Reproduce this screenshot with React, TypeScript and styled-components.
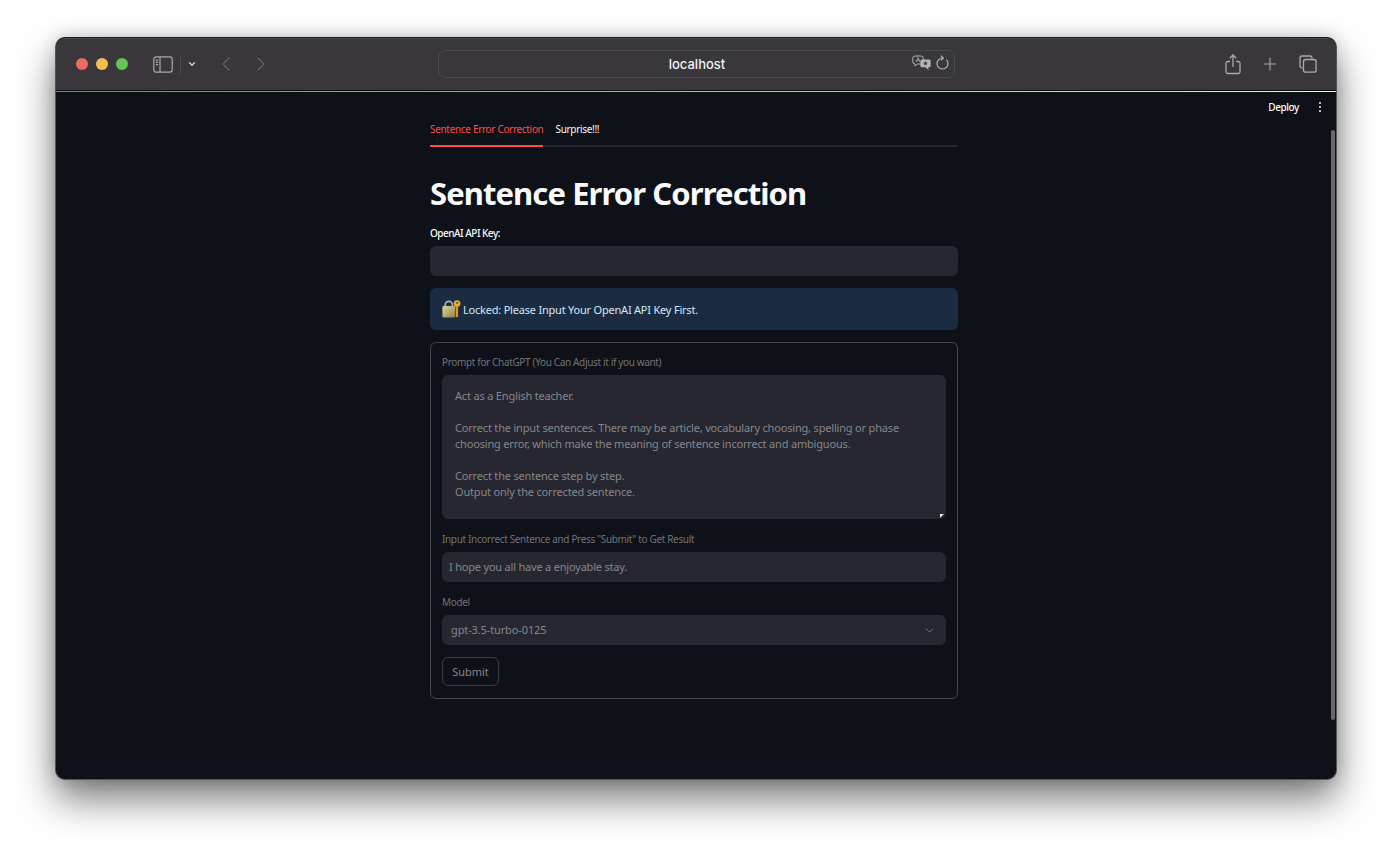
import React from 'react'
import styled, { createGlobalStyle } from 'styled-components'
import { ChevronDown, ChevronLeft, ChevronRight, Plus } from 'lucide-react'

const Global = createGlobalStyle`
  html, body {
    margin: 0;
    height: 100%;
    background: #fff;
    overflow: hidden;
  }
  * { box-sizing: border-box; }
`

const Page = styled.div`
  padding: 37px 55px;
`

const Window = styled.div`
  position: relative;
  width: 1282px;
  height: 743px;
  border-radius: 10px;
  border: 1px solid #55545a;
  border-top-color: #1c1c1e;
  background: #0e1117;
  box-shadow: 0 20px 38px 0 rgba(0, 0, 0, 0.5), 0 0 18px rgba(0, 0, 0, 0.18);
  overflow: hidden;
  display: flex;
  flex-direction: column;
`

const Toolbar = styled.div`
  height: 52px;
  flex: none;
  display: flex;
  align-items: center;
  padding-left: 20px;
  background: #39373c;
  box-shadow: inset 0 1px 0 #48474b;
  color: #a9a8ab;
`

const Lights = styled.div`
  display: flex;
  gap: 8px;
`

const Light = styled.span<{ $color: string }>`
  width: 12px;
  height: 12px;
  border-radius: 50%;
  background: ${p => p.$color};
`

const SidebarButton = styled.div`
  display: flex;
  align-items: center;
  margin-left: 25px;
`

const Divider = styled.span`
  width: 1px;
  height: 19px;
  margin: 0 6px 0 7px;
  background: #4b4a4e;
`

const NavIcons = styled.div`
  display: flex;
  align-items: center;
  gap: 11px;
  margin-left: 17px;
  color: #5f5e62;
`

const AddressBar = styled.div`
  position: relative;
  width: 517px;
  height: 28px;
  margin-left: 165px;
  border: 1px solid #4b4a4f;
  border-radius: 7px;
  display: flex;
  align-items: center;
  justify-content: center;
`

const Host = styled.span`
  font: 500 13px Inter, sans-serif;
  color: #f1f1f2;
  padding-left: 1px;
`

const AddressIcons = styled.div`
  position: absolute;
  right: 5px;
  top: 4px;
  display: flex;
  align-items: center;
  gap: 5px;
  color: #b4b3b6;
`

const Actions = styled.div`
  display: flex;
  align-items: center;
  gap: 19px;
  margin-left: 270px;
  color: #a9a8ab;
`

const Stripe = styled.div`
  height: 2px;
  flex: none;
  background: linear-gradient(90deg, #ff4b4b, #fffd80);
  border-top: 1px solid #0b0b0c;
`

const Main = styled.main`
  flex: 1;
  font-family: 'Noto Sans', sans-serif;
  color: #fafafa;
`

const AppHeader = styled.header`
  height: 30px;
  display: flex;
  align-items: center;
  justify-content: flex-end;
  gap: 17px;
  padding-right: 12px;
  font-size: 10px;
  font-weight: 500;
  letter-spacing: -0.4px;
`

const Kebab = styled.div`
  display: flex;
  flex-direction: column;
  gap: 1.5px;
  width: 8px;
  align-items: center;
`

const Dot = styled.i`
  width: 2.5px;
  height: 2.5px;
  border-radius: 50%;
  background: #fafafa;
`

const Column = styled.div`
  width: 528px;
  margin-left: 374px;
`

const Tabs = styled.nav`
  display: flex;
  gap: 12px;
  height: 25px;
  border-bottom: 2px solid #26272e;
`

const Tab = styled.div<{ $active?: boolean }>`
  height: 25px;
  font-size: 10px;
  line-height: 14px;
  letter-spacing: -0.32px;
  color: ${p => (p.$active ? '#ff4b4b' : '#fafafa')};
  border-bottom: 2px solid ${p => (p.$active ? '#ff4b4b' : 'transparent')};
`

const Title = styled.h1`
  margin: 24px 0 0;
  height: 54px;
  font-size: 31px;
  line-height: 44px;
  font-weight: 700;
  letter-spacing: -0.92px;
  color: #fafafa;
`

const Label = styled.div<{ $muted?: boolean }>`
  height: 16px;
  margin-bottom: 5px;
  font-size: 10px;
  line-height: 16px;
  font-weight: ${p => (p.$muted ? 400 : 500)};
  letter-spacing: ${p => (p.$muted ? '-0.35px' : '-0.5px')};
  color: ${p => (p.$muted ? '#727378' : '#fafafa')};
`

const Field = styled.div<{ $select?: boolean }>`
  height: 30px;
  border-radius: 6px;
  background: #262730;
  padding: ${p => (p.$select ? '0 10px 0 9px' : '0 7px')};
  display: flex;
  align-items: center;
  justify-content: space-between;
  font-size: 11px;
  letter-spacing: ${p => (p.$select ? '-0.12px' : '-0.2px')};
  color: #85868b;
`

const FieldText = styled.span`
  position: relative;
  top: -1px;
`

const Alert = styled.div`
  height: 42px;
  margin: 12px 0;
  padding-left: 12px;
  border-radius: 6px;
  background: #1b2c42;
  color: #d5e6f7;
  display: flex;
  align-items: center;
  gap: 2px;
  font-size: 11px;
  letter-spacing: -0.21px;
`

const Form = styled.div`
  height: 357px;
  padding: 11px 11px 12px;
  border: 1px solid #44464a;
  border-radius: 6px;
  display: flex;
  flex-direction: column;
  gap: 12px;
`

const Prompt = styled.div`
  position: relative;
  height: 144px;
  padding: 13px 13px 0;
  border-radius: 6px;
  background: #262730;
  font-size: 11px;
  line-height: 16px;
  letter-spacing: -0.18px;
  color: #85868b;
  white-space: pre-wrap;
`

const Grip = styled.svg`
  position: absolute;
  right: 2px;
  bottom: 1px;
`

const SubmitButton = styled.div`
  width: 57px;
  height: 29px;
  border: 1px solid #3f4047;
  border-radius: 6px;
  display: flex;
  align-items: center;
  justify-content: center;
  font-size: 11px;
  color: #85868b;
`

const ScrollThumb = styled.div`
  position: absolute;
  right: 1px;
  top: 92px;
  width: 4px;
  height: 590px;
  background: #68696d;
  border-radius: 2px;
`

const SidebarIcon = () => (
  <svg width="20" height="17" viewBox="0 0 20 17" fill="none" stroke="currentColor" strokeWidth="1.2">
    <rect x="0.8" y="0.8" width="18.4" height="15.4" rx="2.4" />
    <path d="M7 1v15" />
    <path d="M2.8 4.2h2.4M2.8 6.4h2.4M2.8 8.6h2.4" />
  </svg>
)

const TranslateIcon = () => (
  <svg width="19" height="15" viewBox="0 0 19 15" fill="none">
    <path d="M3 1h6a2.2 2.2 0 0 1 2.2 2.2v3.6A2.2 2.2 0 0 1 9 9H5.4L3 11V9a2.2 2.2 0 0 1-2.2-2.2V3.2A2.2 2.2 0 0 1 3 1z" stroke="currentColor" />
    <path d="M4 7l2-4.4L8 7M4.8 5.6h2.4" stroke="currentColor" strokeWidth="0.8" />
    <path d="M10 4.5h7a1.6 1.6 0 0 1 1.6 1.6v4.6a1.6 1.6 0 0 1-1.6 1.6h-.6V15l-3-2.7H10a1.6 1.6 0 0 1-1.6-1.6V6.1A1.6 1.6 0 0 1 10 4.5z" fill="currentColor" />
    <path d="M13.5 6l.7 1.6 1.7.1-1.3 1.1.4 1.7-1.5-.9-1.5.9.4-1.7-1.3-1.1 1.7-.1z" fill="#39373c" />
  </svg>
)

const ReloadIcon = () => (
  <svg width="13" height="15" viewBox="0 0 13 15" fill="none" stroke="currentColor" strokeWidth="1.2">
    <path d="M6.5 3A5.5 5.5 0 1 0 12 8.5a5.5 5.5 0 0 0-1.6-3.9" />
    <path d="M4.8 0.6L7.4 3 4.8 5.4" />
  </svg>
)

const ShareIcon = () => (
  <svg width="16" height="21" viewBox="0 0 16 21" fill="none" stroke="currentColor" strokeWidth="1.3">
    <path d="M5 7.5H2.8A1.8 1.8 0 0 0 1 9.3v8.4a1.8 1.8 0 0 0 1.8 1.8h10.4a1.8 1.8 0 0 0 1.8-1.8V9.3a1.8 1.8 0 0 0-1.8-1.8H11" />
    <path d="M8 13V1.2M4.8 4.2L8 1l3.2 3.2" />
  </svg>
)

const TabsIcon = () => (
  <svg width="18" height="18" viewBox="0 0 18 18" fill="none" stroke="currentColor" strokeWidth="1.3">
    <path d="M3.5 13H3a2 2 0 0 1-2-2V3a2 2 0 0 1 2-2h8a2 2 0 0 1 2 2v.5" />
    <rect x="4.5" y="4.5" width="12.6" height="12.6" rx="2.2" />
  </svg>
)

const LockKeyIcon = () => (
  <svg width="19" height="19" viewBox="0 0 19 19">
    <defs>
      <linearGradient id="lockBody" x1="0" y1="0" x2="1" y2="1">
        <stop offset="0" stopColor="#e0d69c" />
        <stop offset="1" stopColor="#8f8044" />
      </linearGradient>
    </defs>
    <path d="M3.2 7V5a3.6 3.6 0 0 1 7.2 0v2" fill="none" stroke="#a9adb0" strokeWidth="1.7" />
    <rect x="0.4" y="6" width="13" height="11.6" rx="1.4" fill="url(#lockBody)" />
    <circle cx="15" cy="3.6" r="3.4" fill="#e9aa2c" />
    <circle cx="15.2" cy="2.8" r="0.9" fill="#1b2c42" />
    <path d="M14 6.5h2.1v9.8l-1 1.3-1.1-1.3z" fill="#d9982a" />
  </svg>
)

export default function App() {
  return (
    <>
      <Global />
      <Page>
        <Window>
          <Toolbar>
            <Lights>
              <Light $color="#ed6a5e" />
              <Light $color="#f5bf4f" />
              <Light $color="#61c554" />
            </Lights>
            <SidebarButton>
              <SidebarIcon />
              <Divider />
              <ChevronDown size={10} strokeWidth={3} color="#d5d5d6" />
            </SidebarButton>
            <NavIcons>
              <ChevronLeft size={24} strokeWidth={1.5} />
              <ChevronRight size={24} strokeWidth={1.5} />
            </NavIcons>
            <AddressBar>
              <Host>localhost</Host>
              <AddressIcons>
                <TranslateIcon />
                <ReloadIcon />
              </AddressIcons>
            </AddressBar>
            <Actions>
              <ShareIcon />
              <Plus size={20} strokeWidth={1.3} />
              <TabsIcon />
            </Actions>
          </Toolbar>
          <Stripe />
          <Main>
            <AppHeader>
              <span>Deploy</span>
              <Kebab>
                <Dot />
                <Dot />
                <Dot />
              </Kebab>
            </AppHeader>
            <Column>
              <Tabs>
                <Tab $active>Sentence Error Correction</Tab>
                <Tab>Surprise!!!</Tab>
              </Tabs>
              <Title>Sentence Error Correction</Title>
              <Label>OpenAI API Key:</Label>
              <Field />
              <Alert>
                <LockKeyIcon />
                <span>Locked: Please Input Your OpenAI API Key First.</span>
              </Alert>
              <Form>
                <div>
                  <Label $muted>Prompt for ChatGPT (You Can Adjust it if you want)</Label>
                  <Prompt>
                    {`Act as a English teacher.

Correct the input sentences. There may be article, vocabulary choosing, spelling or phase
choosing error, which make the meaning of sentence incorrect and ambiguous.

Correct the sentence step by step.
Output only the corrected sentence.`}
                    <Grip width="4" height="4" viewBox="0 0 4 4">
                      <path d="M0 0h4L0 4z" fill="#e6e6e6" />
                    </Grip>
                  </Prompt>
                </div>
                <div>
                  <Label $muted>Input Incorrect Sentence and Press "Submit" to Get Result</Label>
                  <Field>
                    <FieldText>I hope you all have a enjoyable stay.</FieldText>
                  </Field>
                </div>
                <div>
                  <Label $muted>Model</Label>
                  <Field $select>
                    <FieldText>gpt-3.5-turbo-0125</FieldText>
                    <ChevronDown size={13} strokeWidth={1.6} />
                  </Field>
                </div>
                <SubmitButton>Submit</SubmitButton>
              </Form>
            </Column>
          </Main>
          <ScrollThumb />
        </Window>
      </Page>
    </>
  )
}
